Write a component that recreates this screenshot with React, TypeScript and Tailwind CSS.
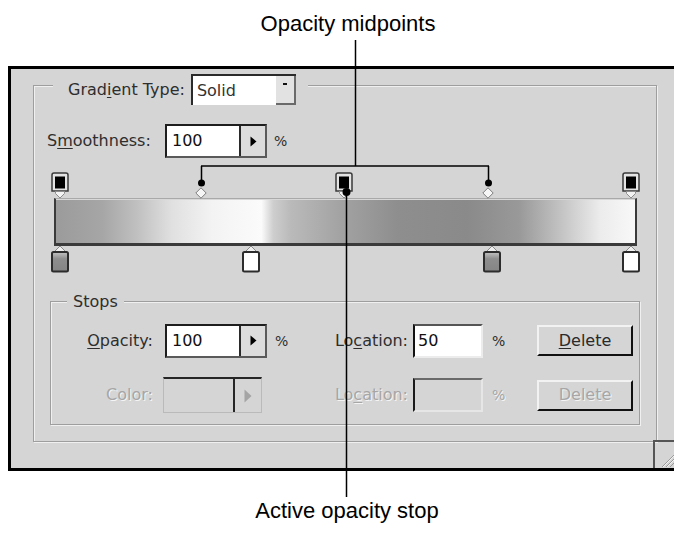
import React from 'react';

const TOP_STOPS = [6, 290, 577];
const MIDPOINTS = [147, 434];
const COLOR_STOPS = [
  { x: 6, fill: 'gray' },
  { x: 197, fill: 'white' },
  { x: 438, fill: 'gray' },
  { x: 577, fill: 'white' },
];

function OpacityStop({ x }: { x: number }) {
  return (
    <svg className="absolute top-0" style={{ left: x - 9 }} width="18" height="27" viewBox="0 0 18 27">
      <path d="M3 1h12a2 2 0 0 1 2 2v16H1V3a2 2 0 0 1 2-2z" fill="#e4e4e4" stroke="#3a3a3a" strokeWidth="1.5" />
      <rect x="4" y="4.5" width="10" height="12" fill="#000" />
      <path d="M4.5 19.5v2L9 26l4.5-4.5v-2z" fill="#f3f3f3" stroke="#8c8c8c" />
    </svg>
  );
}

function Midpoint({ x }: { x: number }) {
  return (
    <svg className="absolute top-[15px]" style={{ left: x - 6 }} width="12" height="12" viewBox="0 0 12 12">
      <path d="M6 0.8L11.2 6 6 11.2 0.8 6z" fill="#f6f6f6" stroke="#7c7c7c" />
    </svg>
  );
}

function ColorStop({ x, fill }: { x: number; fill: string }) {
  return (
    <svg className="absolute -top-[1px]" style={{ left: x - 10 }} width="20" height="28" viewBox="0 0 20 28">
      <defs>
        <linearGradient id="stopGray" x1="0" y1="0" x2="0" y2="1">
          <stop offset="0" stopColor="#c4c4c4" />
          <stop offset="0.35" stopColor="#8e8e8e" />
          <stop offset="1" stopColor="#858585" />
        </linearGradient>
      </defs>
      <path d="M10 1L4 7h12z" fill="#efefef" stroke="#8a8a8a" />
      <rect x="2" y="7" width="16" height="19.5" rx="1.5" fill={fill === 'gray' ? 'url(#stopGray)' : '#fff'} stroke="#2c2c2c" strokeWidth="2" />
    </svg>
  );
}

function SpinField({ value }: { value: string }) {
  return (
    <div className="flex h-[34px] w-[102px] border-2 border-[#5a5a5a] border-l-[#1e1e1e] border-t-[#1e1e1e]">
      <div className="flex flex-1 items-center bg-white pl-[5px] text-[#111]">{value}</div>
      <div className="flex w-[26px] items-center justify-center border-l-2 border-[#2a2a2a] bg-[#dcdcdc]">
        <svg width="7" height="11" viewBox="0 0 7 11">
          <path d="M0.5 0.5L6.5 5.5 0.5 10.5z" fill="#000" />
        </svg>
      </div>
    </div>
  );
}

function DeleteButton({ disabled }: { disabled?: boolean }) {
  return (
    <div
      className={`flex h-[31px] w-[96px] items-center justify-center border-2 border-[#f2f2f2] border-b-[#111] border-r-[#111] ${
        disabled ? 'text-[#a6a6a6] [text-shadow:1px_1px_0_#f4f4f4]' : 'text-[#2a2a2a]'
      }`}
    >
      <span>
        <span className={disabled ? '' : 'underline underline-offset-2'}>D</span>elete
      </span>
    </div>
  );
}

export default function App() {
  return (
    <div className="relative h-[533px] w-[674px] overflow-hidden bg-white">
      {/* Caption top */}
      <div className="h-[66px] pl-[22px] pt-[11px] text-center font-['Liberation_Sans',Arial,sans-serif] text-[22px] leading-[26px] text-black">
        Opacity midpoints
      </div>

      {/* Dialog panel */}
      <div className="relative ml-[8px] h-[405px] w-[666px] border-[3px] border-r-0 border-black bg-[#d5d5d5] font-['DejaVu_Sans',sans-serif] text-[16px] leading-[18px] text-[#2e2e2e]">
        <div className="ml-[22px] mt-[16px] h-[357px] w-[624px] border border-[#9e9e9e] shadow-[inset_1px_1px_0_#f0f0f0,1px_1px_0_#f0f0f0]">
          {/* Gradient type legend */}
          <div className="-mt-[12px] ml-[19px] flex h-[31px] w-fit items-center bg-[#d5d5d5] pl-[15px] pr-[12px]">
            <span>
              Grad<span className="underline underline-offset-2">i</span>ent Type:
            </span>
            <div className="ml-[6px] flex h-[31px] w-[105px] border-l-2 border-t-2 border-[#2a2a2a]">
              <div className="flex flex-1 items-center bg-white pl-[4px] text-[#333]">Solid</div>
              <div className="flex w-[20px] items-start justify-center border-b-2 border-r-2 border-[#6a6a6a] bg-[#e2e2e2] pt-[7px]">
                <div className="h-[2px] w-[4px] bg-[#111]" />
              </div>
            </div>
          </div>

          {/* Smoothness */}
          <div className="mt-[20px] flex h-[32px] items-center pl-[13px]">
            <span className="w-[106px]">
              S<span className="underline underline-offset-2">m</span>oothness:
            </span>
            <div className="ml-[12px]">
              <SpinField value="100" />
            </div>
            <span className="ml-[7px] text-[14px]">%</span>
          </div>

          {/* Gradient editor */}
          <div className="ml-[20px] mt-[15px] w-[583px]">
            <div className="relative h-[26px]">
              {TOP_STOPS.map((x) => (
                <OpacityStop key={x} x={x} />
              ))}
              {MIDPOINTS.map((x) => (
                <Midpoint key={x} x={x} />
              ))}
            </div>
            <div className="h-[48px] border-b-[3px] border-l-2 border-r-2 border-t border-[#3a3a3a] border-t-[#a9a9a9] bg-[linear-gradient(90deg,#9b9b9b_0%,#a6a6a6_8%,#c0c0c0_14%,#e0e0e0_20%,#f3f3f3_27%,#fbfbfb_35.5%,#cecece_37.5%,#bababa_40.5%,#a3a3a3_49%,#8e8e8e_59%,#8a8a8a_71%,#999999_80%,#c2c2c2_87%,#ececec_94%,#f8f8f8_100%)] shadow-[inset_0_1px_0_#d8d8d8]" />
            <div className="relative h-[27px]">
              {COLOR_STOPS.map((s) => (
                <ColorStop key={s.x} x={s.x} fill={s.fill} />
              ))}
            </div>
          </div>

          {/* Stops group */}
          <div className="ml-[16px] mt-[28px] h-[124px] w-[590px] border border-[#9e9e9e] shadow-[inset_1px_1px_0_#f0f0f0,1px_1px_0_#f0f0f0]">
            <div className="-mt-[9px] ml-[16px] w-fit bg-[#d5d5d5] px-[6px]">Stops</div>

            <div className="mt-[12px] flex h-[35px] items-center">
              <span className="w-[102px] text-right">
                <span className="underline underline-offset-2">O</span>pacity:
              </span>
              <div className="ml-[12px]">
                <SpinField value="100" />
              </div>
              <span className="ml-[8px] w-[15px] text-[14px]">%</span>
              <span className="w-[118px] text-right">
                Lo<span className="underline underline-offset-2">c</span>ation:
              </span>
              <div className="ml-[5px] flex h-[34px] w-[70px] items-center border-2 border-[#ececec] border-l-[#111] border-t-[#555] bg-white pl-[3px] text-[#111]">
                50
              </div>
              <span className="ml-[9px] w-[15px] text-[14px]">%</span>
              <div className="ml-[30px]">
                <DeleteButton />
              </div>
            </div>

            <div className="mt-[19px] flex h-[36px] items-center text-[#a6a6a6] [text-shadow:1px_1px_0_#f4f4f4]">
              <span className="w-[102px] text-right">Color:</span>
              <div className="ml-[10px] flex h-[36px] w-[99px] border border-[#bababa] border-t-2 border-t-[#262626]">
                <div className="flex-1" />
                <div className="flex w-[28px] items-center justify-center border-l-2 border-[#262626]">
                  <svg width="8" height="14" viewBox="0 0 8 14">
                    <path d="M0.5 0.5L7.5 7 0.5 13.5z" fill="#a4a4a4" />
                  </svg>
                </div>
              </div>
              <span className="w-[146px] text-right">
                Lo<span className="underline underline-offset-2">c</span>ation:
              </span>
              <div className="ml-[5px] h-[34px] w-[70px] border-2 border-[#e6e6e6] border-l-[#1a1a1a] border-t-[#6a6a6a]" />
              <span className="ml-[9px] w-[15px] text-[14px]">%</span>
              <div className="ml-[30px]">
                <DeleteButton disabled />
              </div>
            </div>
          </div>
        </div>

        {/* Resize grip */}
        <div className="absolute bottom-0 right-0 h-[28px] w-[21px] border-l-2 border-t-2 border-[#555]">
          <svg width="19" height="26" viewBox="0 0 19 26" className="block">
            <path d="M19 13L7 25M19 17L11 25M19 21L15 25" stroke="#9a9a9a" strokeWidth="1" />
            <path d="M19 14L8 25M19 18L12 25" stroke="#f2f2f2" strokeWidth="1" />
          </svg>
        </div>
      </div>

      {/* Caption bottom */}
      <div className="mt-[27px] pl-[20px] text-center font-['Liberation_Sans',Arial,sans-serif] text-[22px] leading-[26px] text-black">
        Active opacity stop
      </div>

      {/* Callout lines */}
      <svg className="pointer-events-none absolute left-0 top-0" width="674" height="533" viewBox="0 0 674 533">
        <g stroke="#000" strokeWidth="1.5" fill="none">
          <path d="M355.5 40V166" />
          <path d="M201 166H489" />
          <path d="M201.5 166V183M488.5 166V183" />
          <path d="M346.5 192V497" />
        </g>
        <g fill="#000">
          <circle cx="201.5" cy="183" r="3.5" />
          <circle cx="488.5" cy="183" r="3.5" />
          <circle cx="346.5" cy="192" r="4" />
        </g>
      </svg>
    </div>
  );
}
